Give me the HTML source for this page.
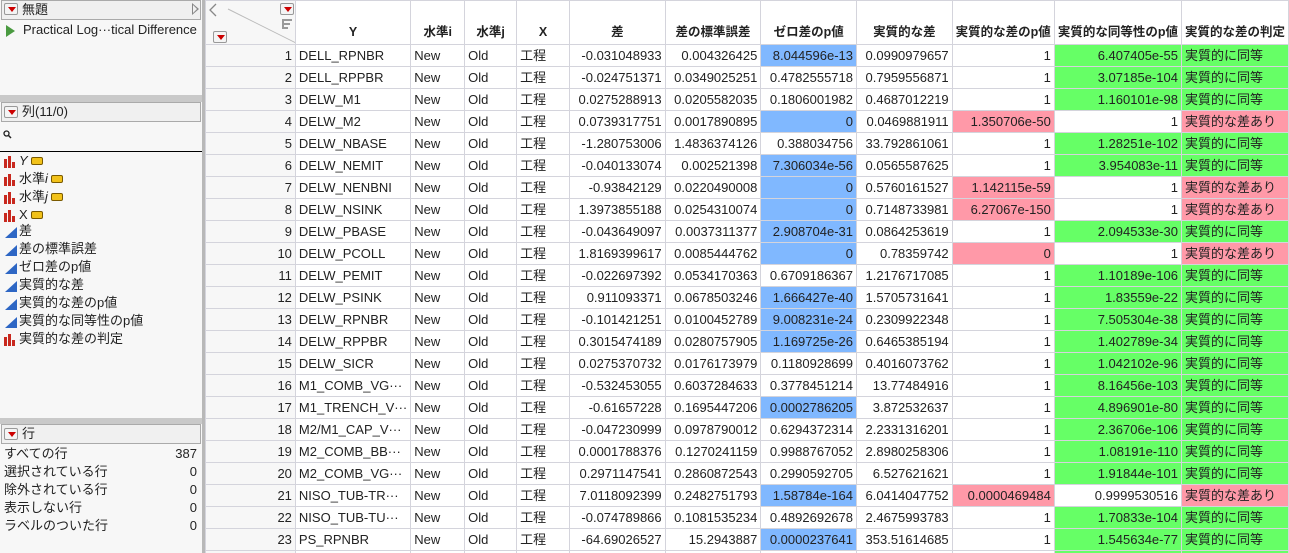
<!DOCTYPE html>
<html><head><meta charset="utf-8">
<style>
*{margin:0;padding:0;box-sizing:border-box}
html,body{width:1289px;height:553px;overflow:hidden}
body{background:#f7f7f7;font-family:"Liberation Sans","Noto Sans CJK JP",sans-serif;font-size:13px;color:#222;position:relative}
.abs{position:absolute}
.bar{background:#c9c9c9}
.hdr{position:absolute;left:1px;width:200px;height:20px;border:1px solid #aaa;background:#f0f0f0;font-size:13px;line-height:18px;padding-left:20px}
.tri{position:absolute;width:14px;height:12px;border:1px solid #999;border-radius:2px;background:#f4f4f4}
.tri:after{content:"";position:absolute;left:3px;top:3px;border-left:4px solid transparent;border-right:4px solid transparent;border-top:5px solid #c00}
.col{position:absolute;left:4px;height:18px;line-height:18px;font-size:13px;padding-left:15px}
.bars{position:absolute;left:0;top:4px;width:14px;height:12px}
.bars i{position:absolute;bottom:0;width:3px;background:#c8281e}
.ramp{position:absolute;left:1px;top:5px;width:0;height:0;border-left:12px solid transparent;border-bottom:11px solid #2d66c4}
.tag{display:inline-block;width:12px;height:8px;background:#f2c21a;border:1px solid #7a5a00;border-radius:2px;margin-left:3px;vertical-align:0}
.rw{position:absolute;left:12px;width:180px;height:18px;line-height:18px}
.rw span{position:absolute;right:0}
table{position:absolute;left:205px;top:0;border-collapse:collapse;table-layout:fixed;background:#fff}
td,th{border:1px solid #d4d4dc;padding:0 3px;white-space:nowrap;overflow:hidden;font-weight:normal}
td{height:22px;line-height:20px;vertical-align:middle;text-align:right}
td *{line-height:20px}
th{height:44px;line-height:16px;vertical-align:bottom;padding-bottom:4px;font-weight:bold;font-size:12.5px;background:#fff;text-align:center}
td.n{background:#f7f7f7}
td.l{text-align:left}
.B{background:#80b8ff}.G{background:#66ff66}.P{background:#ff99a8}
</style></head><body>
<div class="abs" style="left:202px;top:0;width:3px;height:553px;background:#b8b8b8"></div>
<div class="hdr" style="top:0">無題</div>
<div class="tri" style="left:4px;top:3px"></div>
<div class="abs" style="left:192px;top:3px;width:0;height:0;border-top:6px solid transparent;border-bottom:6px solid transparent;border-left:7px solid #888"></div>
<div class="abs" style="left:193px;top:5px;width:0;height:0;border-top:4px solid transparent;border-bottom:4px solid transparent;border-left:4px solid #f0f0f0"></div>
<div class="abs" style="left:6px;top:25px;width:0;height:0;border-top:6px solid transparent;border-bottom:6px solid transparent;border-left:9px solid #4a9a40"></div>
<div class="abs" style="left:23px;top:22px;line-height:16px">Practical Log···tical Difference</div>
<div class="abs bar" style="left:0;top:95px;width:202px;height:7px"></div>
<div class="hdr" style="top:102px">列(11/0)</div>
<div class="tri" style="left:4px;top:106px"></div>
<svg class="abs" style="left:3px;top:130px" width="9" height="9"><circle cx="3.5" cy="3.5" r="2.5" fill="none" stroke="#222" stroke-width="1.3"/><line x1="5.5" y1="5.5" x2="8" y2="8" stroke="#222" stroke-width="1.5"/></svg>
<div class="abs" style="left:0;top:151px;width:202px;height:1px;background:#000"></div>
<div class="col" style="top:152px"><div class="bars"><i style="left:0;height:9px"></i><i style="left:4px;height:12px"></i><i style="left:8px;height:6px"></i></div><i>Y</i><span class="tag"></span></div>
<div class="col" style="top:170px"><div class="bars"><i style="left:0;height:9px"></i><i style="left:4px;height:12px"></i><i style="left:8px;height:6px"></i></div>水準<i>i</i><span class="tag"></span></div>
<div class="col" style="top:188px"><div class="bars"><i style="left:0;height:9px"></i><i style="left:4px;height:12px"></i><i style="left:8px;height:6px"></i></div>水準<i>j</i><span class="tag"></span></div>
<div class="col" style="top:206px"><div class="bars"><i style="left:0;height:9px"></i><i style="left:4px;height:12px"></i><i style="left:8px;height:6px"></i></div>X<span class="tag"></span></div>
<div class="col" style="top:222px"><div class="ramp"></div>差</div>
<div class="col" style="top:240px"><div class="ramp"></div>差の標準誤差</div>
<div class="col" style="top:258px"><div class="ramp"></div>ゼロ差のp値</div>
<div class="col" style="top:276px"><div class="ramp"></div>実質的な差</div>
<div class="col" style="top:294px"><div class="ramp"></div>実質的な差のp値</div>
<div class="col" style="top:312px"><div class="ramp"></div>実質的な同等性のp値</div>
<div class="col" style="top:330px"><div class="bars"><i style="left:0;height:9px"></i><i style="left:4px;height:12px"></i><i style="left:8px;height:6px"></i></div>実質的な差の判定</div>
<div class="abs bar" style="left:0;top:418px;width:202px;height:6px"></div>
<div class="hdr" style="top:424px">行</div>
<div class="tri" style="left:4px;top:428px"></div>
<div class="rw" style="top:445px;left:4px;width:193px">すべての行<span>387</span></div>
<div class="rw" style="top:463px;left:4px;width:193px">選択されている行<span>0</span></div>
<div class="rw" style="top:481px;left:4px;width:193px">除外されている行<span>0</span></div>
<div class="rw" style="top:499px;left:4px;width:193px">表示しない行<span>0</span></div>
<div class="rw" style="top:517px;left:4px;width:193px">ラベルのついた行<span>0</span></div>

<table>
<colgroup><col style="width:94px"><col style="width:110px"><col style="width:55px"><col style="width:53px"><col style="width:54px"><col style="width:96px"><col style="width:96px"><col style="width:96px"><col style="width:96px"><col style="width:102px"><col style="width:124px"><col style="width:105px"></colgroup>
<tr><th style="background:#f7f7f7;position:relative">
<svg width="94" height="44" style="position:absolute;left:0;top:0"><line x1="22" y1="8" x2="94" y2="44" stroke="#bbb"/><path d="M10 3 L4 9 L10 15" fill="none" stroke="#888" stroke-width="1.3"/><g fill="#999"><rect x="76" y="18" width="2" height="10"/><rect x="78" y="18" width="8" height="2"/><rect x="78" y="22" width="6" height="2"/><rect x="78" y="26" width="4" height="2"/></g></svg>
<div class="tri" style="left:74px;top:2px"></div><div class="tri" style="left:7px;top:30px"></div></th>
<th>Y</th><th>水準i</th><th>水準j</th><th>X</th><th>差</th><th>差の標準誤差</th><th>ゼロ差のp値</th><th>実質的な差</th><th>実質的な差のp値</th><th>実質的な同等性のp値</th><th>実質的な差の判定</th></tr>
<tr><td class="n">1</td><td class="l">DELL_RPNBR</td><td class="l">New</td><td class="l">Old</td><td class="l">工程</td><td>-0.031048933</td><td>0.004326425</td><td class="B">8.044596e-13</td><td>0.0990979657</td><td>1</td><td class="G">6.407405e-55</td><td class="l G">実質的に同等</td></tr>
<tr><td class="n">2</td><td class="l">DELL_RPPBR</td><td class="l">New</td><td class="l">Old</td><td class="l">工程</td><td>-0.024751371</td><td>0.0349025251</td><td>0.4782555718</td><td>0.7959556871</td><td>1</td><td class="G">3.07185e-104</td><td class="l G">実質的に同等</td></tr>
<tr><td class="n">3</td><td class="l">DELW_M1</td><td class="l">New</td><td class="l">Old</td><td class="l">工程</td><td>0.0275288913</td><td>0.0205582035</td><td>0.1806001982</td><td>0.4687012219</td><td>1</td><td class="G">1.160101e-98</td><td class="l G">実質的に同等</td></tr>
<tr><td class="n">4</td><td class="l">DELW_M2</td><td class="l">New</td><td class="l">Old</td><td class="l">工程</td><td>0.0739317751</td><td>0.0017890895</td><td class="B">0</td><td>0.0469881911</td><td class="P">1.350706e-50</td><td>1</td><td class="l P">実質的な差あり</td></tr>
<tr><td class="n">5</td><td class="l">DELW_NBASE</td><td class="l">New</td><td class="l">Old</td><td class="l">工程</td><td>-1.280753006</td><td>1.4836374126</td><td>0.388034756</td><td>33.792861061</td><td>1</td><td class="G">1.28251e-102</td><td class="l G">実質的に同等</td></tr>
<tr><td class="n">6</td><td class="l">DELW_NEMIT</td><td class="l">New</td><td class="l">Old</td><td class="l">工程</td><td>-0.040133074</td><td>0.002521398</td><td class="B">7.306034e-56</td><td>0.0565587625</td><td>1</td><td class="G">3.954083e-11</td><td class="l G">実質的に同等</td></tr>
<tr><td class="n">7</td><td class="l">DELW_NENBNI</td><td class="l">New</td><td class="l">Old</td><td class="l">工程</td><td>-0.93842129</td><td>0.0220490008</td><td class="B">0</td><td>0.5760161527</td><td class="P">1.142115e-59</td><td>1</td><td class="l P">実質的な差あり</td></tr>
<tr><td class="n">8</td><td class="l">DELW_NSINK</td><td class="l">New</td><td class="l">Old</td><td class="l">工程</td><td>1.3973855188</td><td>0.0254310074</td><td class="B">0</td><td>0.7148733981</td><td class="P">6.27067e-150</td><td>1</td><td class="l P">実質的な差あり</td></tr>
<tr><td class="n">9</td><td class="l">DELW_PBASE</td><td class="l">New</td><td class="l">Old</td><td class="l">工程</td><td>-0.043649097</td><td>0.0037311377</td><td class="B">2.908704e-31</td><td>0.0864253619</td><td>1</td><td class="G">2.094533e-30</td><td class="l G">実質的に同等</td></tr>
<tr><td class="n">10</td><td class="l">DELW_PCOLL</td><td class="l">New</td><td class="l">Old</td><td class="l">工程</td><td>1.8169399617</td><td>0.0085444762</td><td class="B">0</td><td>0.78359742</td><td class="P">0</td><td>1</td><td class="l P">実質的な差あり</td></tr>
<tr><td class="n">11</td><td class="l">DELW_PEMIT</td><td class="l">New</td><td class="l">Old</td><td class="l">工程</td><td>-0.022697392</td><td>0.0534170363</td><td>0.6709186367</td><td>1.2176717085</td><td>1</td><td class="G">1.10189e-106</td><td class="l G">実質的に同等</td></tr>
<tr><td class="n">12</td><td class="l">DELW_PSINK</td><td class="l">New</td><td class="l">Old</td><td class="l">工程</td><td>0.911093371</td><td>0.0678503246</td><td class="B">1.666427e-40</td><td>1.5705731641</td><td>1</td><td class="G">1.83559e-22</td><td class="l G">実質的に同等</td></tr>
<tr><td class="n">13</td><td class="l">DELW_RPNBR</td><td class="l">New</td><td class="l">Old</td><td class="l">工程</td><td>-0.101421251</td><td>0.0100452789</td><td class="B">9.008231e-24</td><td>0.2309922348</td><td>1</td><td class="G">7.505304e-38</td><td class="l G">実質的に同等</td></tr>
<tr><td class="n">14</td><td class="l">DELW_RPPBR</td><td class="l">New</td><td class="l">Old</td><td class="l">工程</td><td>0.3015474189</td><td>0.0280757905</td><td class="B">1.169725e-26</td><td>0.6465385194</td><td>1</td><td class="G">1.402789e-34</td><td class="l G">実質的に同等</td></tr>
<tr><td class="n">15</td><td class="l">DELW_SICR</td><td class="l">New</td><td class="l">Old</td><td class="l">工程</td><td>0.0275370732</td><td>0.0176173979</td><td>0.1180928699</td><td>0.4016073762</td><td>1</td><td class="G">1.042102e-96</td><td class="l G">実質的に同等</td></tr>
<tr><td class="n">16</td><td class="l">M1_COMB_VG···</td><td class="l">New</td><td class="l">Old</td><td class="l">工程</td><td>-0.532453055</td><td>0.6037284633</td><td>0.3778451214</td><td>13.77484916</td><td>1</td><td class="G">8.16456e-103</td><td class="l G">実質的に同等</td></tr>
<tr><td class="n">17</td><td class="l">M1_TRENCH_V···</td><td class="l">New</td><td class="l">Old</td><td class="l">工程</td><td>-0.61657228</td><td>0.1695447206</td><td class="B">0.0002786205</td><td>3.872532637</td><td>1</td><td class="G">4.896901e-80</td><td class="l G">実質的に同等</td></tr>
<tr><td class="n">18</td><td class="l">M2/M1_CAP_V···</td><td class="l">New</td><td class="l">Old</td><td class="l">工程</td><td>-0.047230999</td><td>0.0978790012</td><td>0.6294372314</td><td>2.2331316201</td><td>1</td><td class="G">2.36706e-106</td><td class="l G">実質的に同等</td></tr>
<tr><td class="n">19</td><td class="l">M2_COMB_BB···</td><td class="l">New</td><td class="l">Old</td><td class="l">工程</td><td>0.0001788376</td><td>0.1270241159</td><td>0.9988767052</td><td>2.8980258306</td><td>1</td><td class="G">1.08191e-110</td><td class="l G">実質的に同等</td></tr>
<tr><td class="n">20</td><td class="l">M2_COMB_VG···</td><td class="l">New</td><td class="l">Old</td><td class="l">工程</td><td>0.2971147541</td><td>0.2860872543</td><td>0.2990592705</td><td>6.527621621</td><td>1</td><td class="G">1.91844e-101</td><td class="l G">実質的に同等</td></tr>
<tr><td class="n">21</td><td class="l">NISO_TUB-TR···</td><td class="l">New</td><td class="l">Old</td><td class="l">工程</td><td>7.0118092399</td><td>0.2482751793</td><td class="B">1.58784e-164</td><td>6.0414047752</td><td class="P">0.0000469484</td><td>0.9999530516</td><td class="l P">実質的な差あり</td></tr>
<tr><td class="n">22</td><td class="l">NISO_TUB-TU···</td><td class="l">New</td><td class="l">Old</td><td class="l">工程</td><td>-0.074789866</td><td>0.1081535234</td><td>0.4892692678</td><td>2.4675993783</td><td>1</td><td class="G">1.70833e-104</td><td class="l G">実質的に同等</td></tr>
<tr><td class="n">23</td><td class="l">PS_RPNBR</td><td class="l">New</td><td class="l">Old</td><td class="l">工程</td><td>-64.69026527</td><td>15.2943887</td><td class="B">0.0000237641</td><td>353.51614685</td><td>1</td><td class="G">1.545634e-77</td><td class="l G">実質的に同等</td></tr>
<tr><td class="n"></td><td></td><td></td><td></td><td></td><td></td><td></td><td></td><td></td><td></td><td class="G"></td><td class="G"></td></tr>
</table>
</body></html>
